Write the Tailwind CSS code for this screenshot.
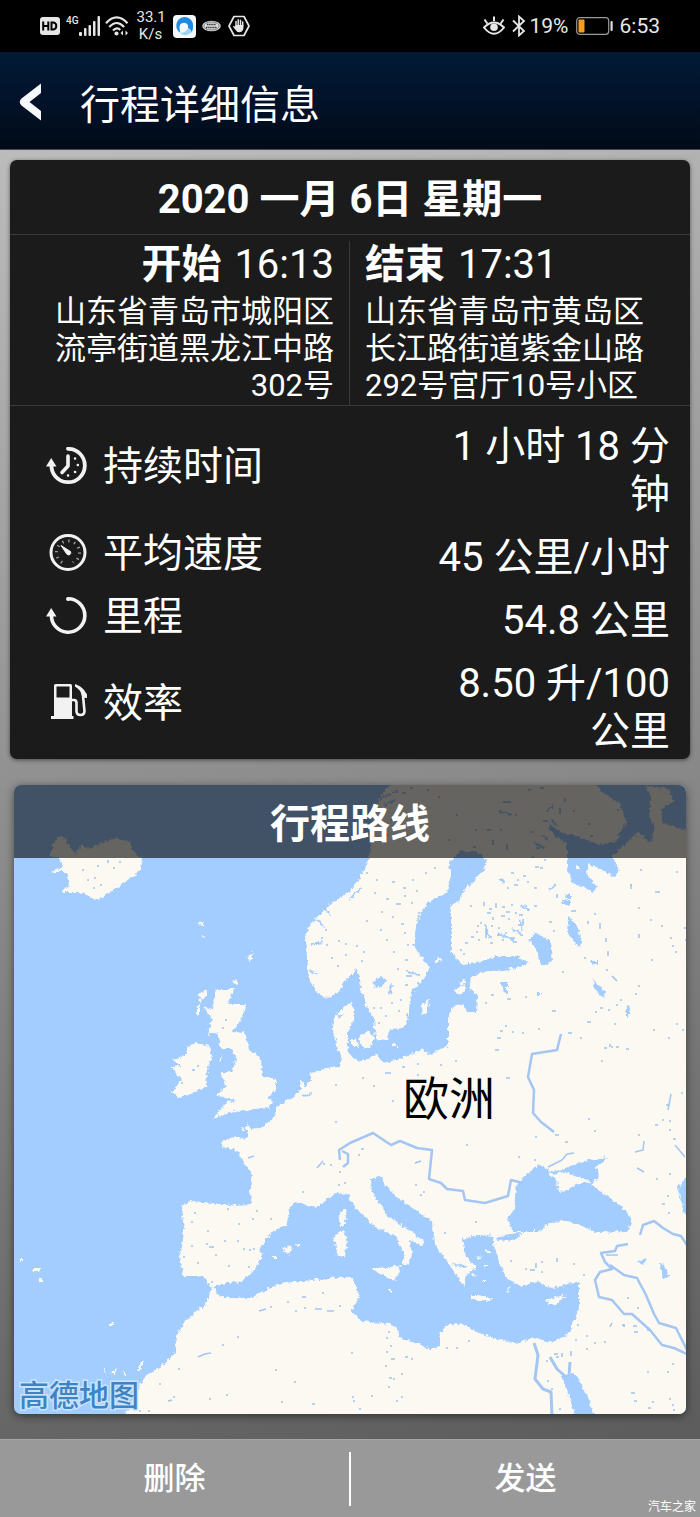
<!DOCTYPE html>
<html lang="zh-CN">
<head>
<meta charset="utf-8">
<meta name="viewport" content="width=device-width, initial-scale=1">
<title>行程详细信息</title>
<script src="https://cdn.jsdelivr.net/npm/@tailwindcss/browser@4"></script>
</head>
<body class="min-h-screen flex flex-col bg-black text-white font-[Roboto,'Noto_Sans_CJK_SC',sans-serif]">

<!-- status bar -->
<div class="h-[52px] shrink-0 flex items-center justify-between pl-10 pr-10 text-[#e8e8e8]">
  <div class="flex items-center">
    <svg class="w-5 h-5" viewBox="0 0 20 20" role="img" aria-label="HD"><rect y="1" width="20" height="18" rx="3" fill="#e6e6e6"/><path d="M3.200 5.500v9M8.300 5.500v9M3.200 10h5M11.500 6.400v7.200h1.800q3-.5 3-3.600t-3-3.600z" fill="none" stroke="#000" stroke-width="2"/></svg>
    <div class="flex items-start ml-[6px] h-6">
      <span class="text-[10px] leading-[14px] font-medium">4G</span>
      <svg class="w-[22px] h-5 mt-[2px]" viewBox="0 0 22 20" fill="#e6e6e6"><rect x="0" y="16" width="3" height="4" rx="1"/><rect x="5" y="12" width="2.500" height="8" rx="1"/><rect x="9.500" y="9" width="2.500" height="11" rx="1"/><rect x="14" y="5" width="2.500" height="15" rx="1"/><rect x="18.500" y="0" width="2.500" height="20" rx="1"/></svg>
    </div>
    <svg class="w-6 h-5 ml-[4px]" viewBox="0 0 24 20" fill="none" stroke="#e6e6e6" stroke-width="2.200"><path d="M1 7.200q10.500-11.500 21.500 0M4.300 11q7.500-8 14.800 0M8 14.500q4-4 7.300-.6"/><circle cx="11.500" cy="17.500" r="1" fill="#e6e6e6"/><path d="M18 14.500v5l-2.500-2.500zM20.500 14.500v5l2.500-2.500z" fill="#e6e6e6" stroke="none"/></svg>
    <div class="ml-[8px] w-7 text-center text-[15px] leading-[17px]">33.1<br>K/s</div>
    <svg class="w-[23px] h-[23px] ml-[8px]" viewBox="0 0 23 23"><rect width="23" height="23" rx="4" fill="#f4f8fb"/><path d="M7.500 18A8.500 8.500 0 1 1 20 12.500q0 3-1.500 5-.5-3.500-3.500-4.500.8-5-4-5.200-5 .2-4.500 5.500 0 2.500 1 4.700z" fill="#1f8be0"/><path d="M7.500 18q1.500 2.500 5 2.200 2.500-.2 6-2.700-.5-3.500-3.500-4.500-2 4.500-7.500 5z" fill="#9ed4f4"/></svg>
    <svg class="w-[19px] h-[12px] ml-[6px]" viewBox="0 0 19 12"><ellipse cx="9.500" cy="6" rx="9.300" ry="5.200" fill="#ddd"/><ellipse cx="9.500" cy="6" rx="7.700" ry="4" fill="none" stroke="#555" stroke-width=".7"/><path d="M5 4.500h9M4 7.500h11" stroke="#333" stroke-width="1.500" stroke-dasharray="1.500 .6"/></svg>
    <svg class="w-[22px] h-[22px] ml-[7px]" viewBox="0 0 22 22"><path d="M6 1.500h10l5 9.500-5 9.500H6L1 11z" fill="none" stroke="#e6e6e6" stroke-width="1.700" stroke-linejoin="round"/><path d="M8 12V6.500M10.200 10V4.800M12.500 10V5.300M14.700 11V7" stroke="#e6e6e6" stroke-width="1.500" stroke-linecap="round"/><path d="M7.300 10h8.100v3.500q-.8 3.800-4 3.800-2.800 0-4.400-3L5 11.800q.8-1.500 2.300.3z" fill="#e6e6e6"/></svg>
  </div>
  <div class="flex items-center text-[21px] leading-6">
    <svg class="w-[22px] h-5" viewBox="0 0 22 20" fill="none" stroke="#e6e6e6" stroke-width="2"><path d="M1 11.500q10-10 20 0-10 12.500-20 0zM4.300 7.500L1.500 3.500M11 5V.5M17.700 7.500l2.800-4"/><circle cx="11" cy="11.300" r="3.800" fill="#e6e6e6" stroke="none"/></svg>
    <svg class="w-[14px] h-[22px] ml-[7px]" viewBox="0 0 14 22" fill="none" stroke="#e6e6e6" stroke-width="1.800"><path d="M1 5.500L12 16l-5 4.500V1.500L12 6 1 16.500"/></svg>
    <span class="ml-[4px]">19%</span>
    <svg class="w-[37px] h-[18px] ml-[7px]" viewBox="0 0 37 18"><rect x=".7" y=".7" width="32" height="16.600" rx="3" fill="none" stroke="#9a9a9a" stroke-width="1.200"/><rect x="2.500" y="2.500" width="6" height="13" rx="1" fill="#f59a23"/><rect x="34.500" y="4" width="2.200" height="10" rx="1" fill="#ddd"/></svg>
    <span class="ml-[7px]">6:53</span>
  </div>
</div>

<!-- title bar -->
<header class="h-[98px] shrink-0 flex items-center pl-[19px] pt-1 bg-linear-to-b from-[#021a35] via-[#02122a] to-[#010b18] border-b border-[#4a4a50]">
  <button type="button" aria-label="返回" class="w-[61px] h-12 flex items-center">
    <svg class="w-6 h-10" viewBox="0 0 24 40"><path d="M22 .5v9.500L10.500 19 22 28v9.500L2.500 22.500q-3.500-3.500 0-7z" fill="#f6f8fb"/></svg>
  </button>
  <h1 class="pt-[6px] text-[40px] leading-[56px]">行程详细信息</h1>
</header>

<main class="grow bg-[linear-gradient(168deg,#bcbcbc_0%,#8b8b8b_50%,#5c5c5c_100%)] px-[10px] pt-[10px] pb-[25px]">

  <!-- trip summary -->
  <section class="rounded-[7px] bg-[#1b1b1b] shadow-[0_1px_4px_rgba(0,0,0,0.5)]">
    <h2 class="h-[75px] pt-[6px] border-b border-[#3a3a3a] flex items-center justify-center text-[40px] leading-[48px] font-bold">2020 一月 6日 星期一</h2>

    <div class="grid grid-cols-2 pt-[6px] border-b border-[#3a3a3a]">
      <div class="pr-[15px] pb-px border-r border-[#3a3a3a] text-right">
        <h3 class="text-[40px] leading-[48px] pb-[4px]"><b class="mr-[3px]">开始</b> 16:13</h3>
        <p class="pl-[30px] text-[31px] leading-[37px]">山东省青岛市城阳区流亭街道黑龙江中路302号</p>
      </div>
      <div class="pl-[15px]">
        <h3 class="text-[40px] leading-[48px] pb-[4px]"><b class="mr-[3px]">结束</b> 17:31</h3>
        <p class="pr-[30px] text-[31px] leading-[37px]">山东省青岛市黄岛区长江路街道紫金山路292号官厅10号小区</p>
      </div>
    </div>

    <dl class="flex flex-col gap-[15px] pt-[17px] pb-[3px] pl-9 pr-5 text-[40px]">
      <div class="flex items-center justify-between">
        <dt class="flex items-center gap-[15px] pb-2 leading-[40px]">
          <svg class="w-[42px] h-[38px] mb-[2px]" viewBox="0 0 42 38" fill="none" stroke="#f2f2f2"><path d="M22 1.800A16.700 16.700 0 1 1 5.500 17" stroke-width="3.800" stroke-linecap="round"/><path d="M5.200 11L0 19.500h10.500z" fill="#f2f2f2" stroke="none"/><path d="M22 9v10l-6 6.500" stroke-width="3.600" stroke-linecap="round" stroke-linejoin="round"/><path d="M29 11.500h.1M31.800 18h.1M29 25h.1M22 28.500h.1" stroke-width="2.500" stroke-linecap="round"/></svg>
          持续时间</dt>
        <dd class="w-[244px] text-right leading-[48px]">1 小时 18 分钟</dd>
      </div>
      <div class="flex items-center justify-between">
        <dt class="flex items-center gap-[15px] pb-2 leading-[40px]">
          <svg class="w-[42px] h-[38px] mb-[2px]" viewBox="0 0 42 38" fill="none" stroke="#f2f2f2"><circle cx="22" cy="18.500" r="17" stroke-width="3"/><circle cx="22" cy="18.500" r="11.500" stroke-width="3" stroke-dasharray="1.200 4.820" stroke="#aaa"/><path d="M16 29.500l6-5 6 5v3H16z" fill="#1b1b1b" stroke="none"/><path d="M15 11.500l9.500 6q1 2-.8 3.200-2 .8-3-.8z" fill="#f2f2f2" stroke-width="1"/></svg>
          平均速度</dt>
        <dd class="w-[244px] text-right leading-[48px]">45 公里/小时</dd>
      </div>
      <div class="flex items-center justify-between">
        <dt class="flex items-center gap-[15px] pb-2 leading-[40px]">
          <svg class="w-[42px] h-[38px] mb-[2px]" viewBox="0 0 42 38" fill="none" stroke="#f2f2f2"><path d="M22 1.800A16.700 16.700 0 1 1 5.500 17" stroke-width="3.600"/><circle cx="22" cy="2" r="2" fill="#f2f2f2" stroke="none"/><path d="M5.200 11L0 19.500h10.500z" fill="#f2f2f2" stroke="none"/></svg>
          里程</dt>
        <dd class="w-[244px] text-right leading-[48px]">54.8 公里</dd>
      </div>
      <div class="flex items-center justify-between">
        <dt class="flex items-center gap-[15px] pb-2 leading-[40px]">
          <svg class="w-[42px] h-[38px] mb-[2px]" viewBox="0 0 42 38"><path d="M8 1.500q0-1.500 1.500-1.500h15q1.500 0 1.500 1.500V32h1.500v3H5v-3h3zM10.500 2.500v11h13v-11z" fill="#f2f2f2" fill-rule="evenodd"/><path d="M26 16h2q2.500 0 2.500 3v8q0 4 4 4t4-4L37 12" fill="none" stroke="#f2f2f2" stroke-width="2.600"/><path d="M29 0q6 2 9 6l3 4.500v3.500q-3 .5-5.500-2.500-.5-5.500-6.500-9z" fill="#f2f2f2"/></svg>
          效率</dt>
        <dd class="w-[244px] text-right leading-[48px]">8.50 升/100 公里</dd>
      </div>
    </dl>
  </section>

  <!-- route map -->
  <section class="relative mt-[26px] mx-[4px] overflow-hidden rounded-[7px] shadow-[0_2px_8px_rgba(0,0,0,0.5)]">
    <svg class="block w-full" viewBox="14 785 672 629" role="img" aria-label="行程路线地图">
      <defs>
        <filter id="coast" filterUnits="userSpaceOnUse" x="0" y="770" width="700" height="660" color-interpolation-filters="sRGB">
          <feTurbulence type="turbulence" baseFrequency="0.18" numOctaves="2" seed="4" result="n"/>
          <feDisplacementMap in="SourceGraphic" in2="n" scale="5" xChannelSelector="R" yChannelSelector="G"/>
        </filter>
      </defs>
      <rect x="0" y="770" width="700" height="660" fill="#a3cdff"/>
      <g filter="url(#coast)" transform="translate(-2 -2)">
        <!-- Europe, Asia and Africa: Atlantic outline -->
        <path fill="#fcf9f2" d="M392 770L390 787 380 798 374 815 372 838 370 857 366 870 358 882 350 892 333 903 322 914 313 923 305 937 308 957 308 973 313 985 320 995 328 999 340 992 345 983 353 975 357 970 361 978 358 1000 352 1003 344 1008 335 1017 333 1030 338 1047 342 1060 340 1067 327 1068 318 1073 310 1072 312 1083 302 1082 302 1090 293 1098 277 1108 275 1117 263 1128 253 1130 248 1124 248 1140 237 1137 221 1142 225 1148 240 1153 245 1167 253 1173 251 1190 252 1205 233 1206 193 1202 182 1207 185 1230 180 1257 185 1277 203 1277 212 1289 212 1292 205 1307 187 1320 177 1337 176 1353 163 1367 147 1375 137 1393 120 1430H710V770Z"/>
        <!-- Iceland, Ireland, Great Britain and small Atlantic islands -->
        <path fill="#fcf9f2" d="M50 857L58 837 65 838 72 850 78 855 82 845 90 850 100 845 117 838 130 842 133 850 143 860 140 873 120 887 98 901 80 893 62 893 70 885 67 873 52 873 63 867 58 857ZM197 1043L210 1047 213 1057 208 1070 207 1088 180 1098 172 1093 182 1080 173 1068 182 1067 173 1060 187 1057 187 1048ZM217 990L235 990 228 1005 247 1005 240 1023 233 1032 245 1033 250 1050 262 1060 263 1077 277 1080 277 1090 268 1098 273 1102 270 1108 230 1113 213 1119 228 1103 237 1102 217 1095 227 1087 222 1073 233 1073 237 1060 232 1050 222 1050 218 1033 208 1037 213 1020 203 1007 213 1010ZM200 995l7-5v6l-6 7zM197 1006l3-1v10l-3 1zM233 981l5-1v5zM197 925l7-3v4zM202 934l3 3-2 2zM248 958l6-5-2 11zM220 1058l4 0-3 5zM241 1128l6 2-4 2z"/>
        <path fill="#fcf9f2" d="M20 1259h4v3h-4zM34 1269h7v3h-7zM41 1279h2v3h-2zM109 1324h5v2h-5zM104 1367l3 2-2 5zM110 1373l9-3-3 5zM124 1373h3v3h-3zM138 1372l3-10 3 0-4 11z"/>
        <!-- Kattegat, Baltic and gulfs -->
        <path fill="#a3cdff" d="M350 978L357 970 361 978 362 990 367 1007 375 1020 377 1040 388 1041 390 1030 405 1029 410 1010 412 992 425 980 430 967 422 957 415 947 417 927 423 910 433 900 447 893 452 880 450 863 460 852 477 852 487 860 485 870 473 883 463 893 460 902 450 907 452 920 452 952 463 965 483 962 497 957 517 957 530 964 513 970 483 973 472 978 470 990 478 997 477 1013 468 1013 463 1005 453 1007 449 1020 449 1047 437 1052 433 1057 423 1050 393 1063 383 1062 377 1056 360 1062 350 1056 348 1035 354 1020 355 1010 352 1000 340 995Z"/>
        <path fill="#fcf9f2" d="M360 1036l10-4 5 6-3 9-6 3-5-6zM352 1040l6 1 1 6-7 0zM424 1005l7-5-3 12-5 4zM456 990l9-4 2 3-8 8zM460 983l6-3 1 4-5 2zM436 960l6-1 1 3-6 2zM393 1044h4v3h-4z"/>
        <!-- Barents and White Sea -->
        <path fill="#a3cdff" d="M595 770L597 787 603 793 620 803 627 823 617 842 600 845 580 838 563 833 550 825 549 830 557 837 568 845 568 867 573 883 593 893 598 887 587 873 590 865 615 877 620 872 613 858 630 840 640 833 652 843 655 827 650 817 652 800 646 786 670 790 675 802 662 810 663 823 683 830 710 828V770Z"/>
        <!-- Mediterranean -->
        <path fill="#a3cdff" d="M213 1289L217 1286 243 1282 255 1270 263 1258 262 1247 272 1233 288 1225 290 1208 297 1203 317 1208 337 1193 350 1197 357 1210 377 1228 397 1238 405 1253 403 1265 407 1268 413 1255 410 1240 425 1247 423 1240 403 1227 387 1215 380 1203 372 1192 371 1180 383 1177 387 1187 400 1200 413 1208 433 1223 435 1245 445 1258 453 1270 465 1287 467 1275 477 1268 467 1257 463 1240 483 1235 493 1237 495 1250 502 1267 507 1278 522 1287 537 1282 553 1289 580 1282 580 1307 574 1325 568 1337 550 1343 535 1338 520 1344 500 1340 483 1335 463 1325 447 1326 440 1337 440 1347 430 1350 415 1343 400 1338 397 1327 390 1325 363 1322 352 1312 360 1297 353 1278 320 1280 277 1285 263 1293 250 1299 223 1298Z"/>
        <path fill="#fcf9f2" d="M340 1213l6-4 1 12-3 8-5-6zM335 1235l9-4 4 8-2 18-8 0zM373 1268l13 1 16-3-6 15-8-2-14-8zM471 1296l8 0 14 3-1 3-14-1-7-2zM548 1301l10-3 10-4-8 7-4 4-7 0zM283 1250l8-3 3 3-5 5zM273 1256h4v3h-4zM297 1245h4v2h-4zM476 1256l6 2-2 2zM484 1266h6v2h-6zM487 1251h4v3h-4zM507 1290l4-3-2 6zM474 1275l5 2h-5zM482 1281h4v2h-4zM389 1291h3v2h-3z"/>
        <!-- Black Sea, Azov, Marmara, Caspian, Red Sea, northern lakes -->
        <path fill="#a3cdff" d="M515 1210L517 1187 530 1173 540 1165 553 1172 563 1170 580 1163 608 1158 598 1167 600 1178 592 1185 613 1200 630 1215 632 1224 628 1232 597 1233 580 1225 567 1222 550 1223 540 1232 513 1232 508 1220ZM497 1238l20-5 6 2-10 6-14 1zM678 1190l10-13 20 0v40h-21l-3-10zM562 1376l14-1 8 12 8 20 8 22h-20l-8-26zM530 940l6-7 15 8 2 20-6 4-6 0-3-12zM569 918l8 6 6 20-3 4-12-15zM502 983h6v12l-4-2zM594 980l12 13-1 6-9-9zM627 1008l4 2-2 8-2-2zM373 983l8-6 6 3-3 6-8 4zM391 987l3-4-2 12-4 2zM499 880l5-2 2 5-6 0zM563 901h8v4h-7zM567 895l5-1v6h-4zM537 993h5v3h-5zM592 961h6v4h-6zM637 1262l10-3-4 6zM660 1264l5 1 5 12-6 2z"/>
        <path fill="#fcf9f2" d="M550 1175L567 1173 593 1183 577 1185 567 1191 560 1192 558 1182ZM576 866h4v3h-4z"/>
        <!-- Aegean, Norwegian and Danish coast detail -->
        <path fill="none" stroke="#a3cdff" stroke-width="2" d="M453 1264l14 4M338 1018l6-3M306 1078v10M303 1096l11-2M310 970l8 5M318 920l6 8M325 908l5 8M312 945l12-2M350 900l12-12M378 800l20-8M385 806l12-6M500 812l12 3M548 812l6-6M552 820l6 6M535 843l10 6M548 840l-6-4M500 935l14 6M485 925l6 14M522 905l8 6M520 920l4 12M512 930l10 4M556 885l-6 6M408 972l12 3"/>
      </g>
      <!-- rivers -->
      <g fill="none" stroke="#a3c6f2" stroke-width="2" stroke-linejoin="round">
        <path d="M561 1034L557 1050 532 1054 528 1077 534 1090 533 1113 541 1122 554 1132" stroke-width="2.500"/>
        <path d="M340 1160L339 1150 350 1143 373 1133 391 1145 400 1141 417 1148 432 1150 429 1179 441 1183 447 1189 463 1191 465 1200 485 1203 508 1196 511 1180 523 1183" stroke-width="2.500"/>
        <path d="M342 1151l6 3v9l-5 4M628 1244l-11 2-2 5-14 2 4 9 7 7-12 3-5 8 4 17 13 3 12 14 8 0 18 16 12 15 12 3 15 7M610 1265l14 10 13 3 9 17 8 19 5 9 17 5 12 24M640 1235l3-10 11-4 9 7 10 6 8 2 6 9" stroke-width="2.500"/>
        <path d="M534 1343l4 12-3 24 8 10 8 3 1 24" stroke-width="3"/><path d="M550 1357l7 12 9 8M569 1376l1-14" stroke-width="3"/>
        <path d="M548 1167l14-7 5-6 7-1M635 1152l8-2 1-9M668 1110l3-16M606 1255h12M675 1145l10 12M637 1168l7 4M198 1357l7-3 6-1M259 1311l7-2M315 1309h7M327 1311h7M317 1168l6-7M248 1158l6-2" stroke-width="1.500"/>
      </g>
      <!-- scattered lakes -->
      <g fill="none" stroke="#9fc3ec" stroke-width="1.500">
        <path d="M366 873h2M376 880h2M392 882h3M403 888h3M374 893h2M386 899h3M396 904h5M404 896h2M411 903h2M381 912h2M392 917h2M366 921h2M401 924h3M418 913h2M356 946h2M363 952h2M361 961h2M393 952h2M405 960h3M397 969h2M386 940h2M407 945h2M404 933h2M380 930h2M412 880h2M425 873h2M434 868h2M416 891h2M321 938h2M315 943h4M326 945h2M338 941h2M331 958h2M337 966h2M345 944h2M325 930h2M345 955h2M380 1008h2M385 1016h2M398 1011h2M373 1008h2M400 1000h2M378 1023h2M391 1003h2M406 976h6M405 985h3"/>
        <path d="M511 873h3M517 880h2M523 876h3M507 888h2M514 885h4M527 882h2M535 867h4M540 868h3M544 860h2M534 888h3M470 906h2M484 902v4M489 909h3M496 903v5M502 907h3M506 912h4M511 905h2M487 913h4M493 917v3M501 916h4M508 919h2M515 913h2M519 915h4M523 919v6M518 925h5M480 923h2M486 930v8M491 926h2M497 935h4M502 940h2M490 943h3M476 932h2M471 937h3M478 940h2M465 943h3M460 950h2M463 954h2M505 933h2M510 938h5M513 942h4M520 935h3M477 926h2M498 928h2M527 910h2M534 906h3M557 894v4M549 922h3M571 911h5M553 931h2M573 937h2M588 921v3M600 923v6M606 938v4M608 951v5M606 970h2M612 976l5 5M631 884v5M630 885h2M640 870h2M655 892h5M676 872h2M638 908h2M650 920h2M639 934v4M661 926h2M670 938h2M672 946h2M675 952h2M685 940h2M651 960h2M684 928h2M584 958h2M594 914h2M562 972h2"/>
        <path d="M491 995h3M485 1003h2M507 999h4M525 997h2M552 1011h4M538 1029h2M500 1031h3M505 1026h2M497 1038h4M522 1033h2M495 1050h4M512 1032h2M568 1033h4M580 1038h2M587 1022h4M595 1012h2M600 1008h3M608 1010h2M616 1005h2M620 1000h2M638 986h2M635 994h2M653 1030h2M676 1024h2M614 1024h2M604 1048h3M611 1047h2M616 1047h3M626 1049h3M601 1061h2M610 1044v3M682 1030h2M668 1038h2M385 1073h6M402 1067h3M417 1064h2M455 1061h2M440 1065h2M362 1078h2M373 1086h2M392 1101h2M417 1075h2M535 1137h2M555 1135h4M565 1142h3M588 1119h2M594 1131h2M466 1145h2M415 1163l6-2M361 1149h3M358 1155h2M518 1157h2M534 1160h2M506 1078h4M638 1135h2M655 1125h3M662 1120h2M669 1121h2M656 1179h2M669 1174h2M681 1093h2M687 1090h2M666 1105h3M669 1130h2M673 1139h3"/>
        <path d="M82 870h2M97 866h2M108 860v3M119 862h2M113 868h2M94 878h2M100 885h2M87 880h2M93 888h2M192 1070h3M197 1066h2M181 1083h2M222 1028h2M225 1020h2M335 1085h2M335 1122h2M323 1164h2M339 1172h2M330 1165h2M344 1183h2M302 1192h2M338 1185h2M194 1213h2M191 1222h2M207 1231h2M227 1209h2M238 1224h2M191 1246h2M206 1244h2M209 1247h5M224 1241h2M237 1241h2M252 1219h2M270 1219h2M243 1249h2M249 1250h2M253 1249h2M228 1266h2M248 1267h2M215 1255h2M197 1263h2M183 1257h2M211 1282h2M256 1211h2"/>
        <path d="M270 1307h2M287 1302h2M302 1297h4M295 1311h2M304 1308h2M339 1306h2M322 1293h2M237 1337h2M222 1345h2M178 1369h2M159 1384h2M168 1401l4-1M173 1397h2M209 1399h2M226 1395h2M275 1370h2M294 1382h2M281 1402h2M312 1404h3M139 1411h2M148 1411h2M388 1332h2M386 1338h2M390 1346h2M386 1352h2M391 1359h4M405 1357h3M411 1359h2M385 1366h2M389 1378h3M393 1379h2M401 1374h2M388 1387h2M401 1397h2M396 1401h2M352 1397h2M353 1401h2M371 1396h2M359 1409h2M351 1353h2M456 1348h2M446 1348h2M468 1341h2M475 1222h2M444 1233h2M426 1219h2M420 1195h2M415 1185h2M423 1192h2M510 1261h2M525 1269h2M530 1270h5M536 1263v5M541 1272h2M557 1258v4M541 1262h2M573 1264h2M583 1275h2"/>
        <path d="M610 1327l2-4M622 1325h3M627 1298h2M633 1326h4M634 1332h4M647 1330h2M637 1308h2M623 1326h2M594 1343h2M604 1342h2M586 1336h2M577 1325h2M586 1349h2M575 1340h2M571 1351v5M562 1353v4M554 1354h4M546 1361h2M556 1357h3M547 1381h2M551 1389h2M559 1409h2M631 1393h4M634 1401h3M648 1408h3M652 1402h2M669 1399h2M672 1405h2M673 1410h2M647 1372h2M667 1372h2M672 1364h2M686 1359h2M662 1204h3M667 1196h2M668 1213h2M532 857h2M500 830h2M475 830h2M456 815h2M438 797h2M427 790h2M448 840h2M487 830h4M515 815h2M503 802h8M528 790h3M540 788h4M560 808v6M565 798v4M573 811h2M588 824h2M590 836h3M617 810h2M550 830h3M543 821h5M536 848h4M530 832h3M493 840v5M507 844v6M473 847h3M415 812h3M405 835h3M385 835h3M402 793h4M410 788h3M390 820h3"/>
      </g>
      <text x="403" y="1115" font-size="46" fill="#000" class="font-['Noto_Sans_CJK_SC',sans-serif]">欧洲</text>
      <text x="19" y="1406" font-size="30" fill="#3f83c3" stroke="#c9e3fb" stroke-width="3" paint-order="stroke" class="font-['Noto_Sans_CJK_SC',sans-serif] font-medium">高德地图</text>
    </svg>
    <h2 class="absolute inset-x-0 top-0 h-[73px] flex items-center justify-center bg-black/60 pt-[6px] text-[40px] leading-[48px] font-bold">行程路线</h2>
  </section>
</main>

<!-- actions -->
<footer class="relative h-[78px] shrink-0 flex items-center bg-[#999] border-t border-[#a6a6a6] text-[31px] leading-10 font-medium">
  <button type="button" class="flex-1 h-full">删除</button>
  <span class="w-[2px] h-[54px] bg-white"></span>
  <button type="button" class="flex-1 h-full">发送</button>
  <span class="absolute right-[4px] bottom-[2px] text-xs leading-4 font-normal">汽车之家</span>
</footer>
</body>
</html>
